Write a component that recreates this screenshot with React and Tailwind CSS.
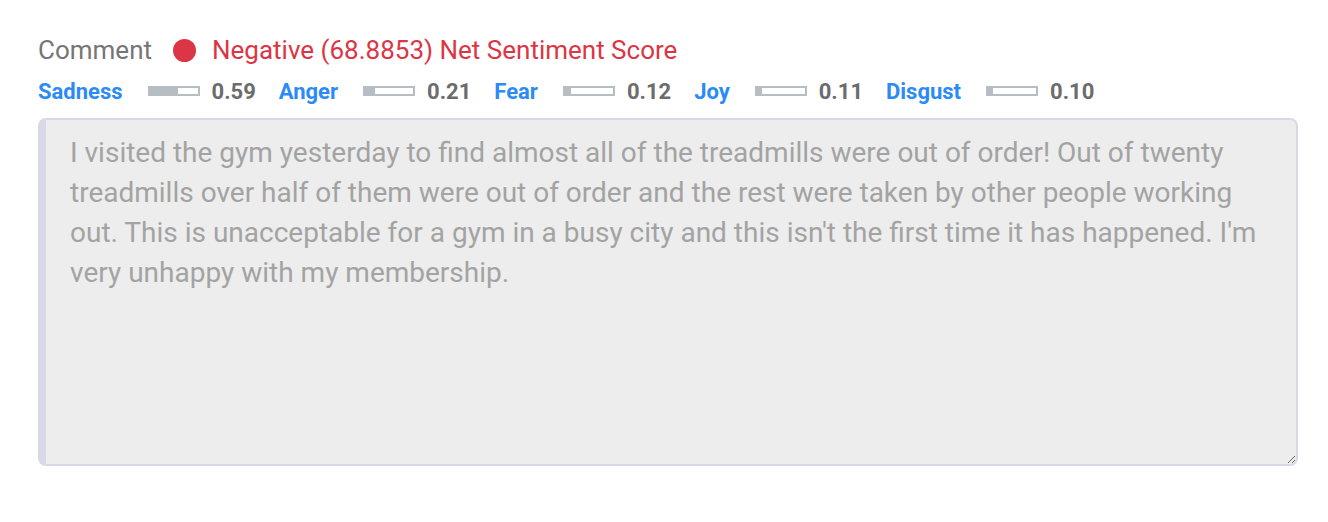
const emotions = [
  { name: "Sadness", score: 0.59 },
  { name: "Anger", score: 0.21 },
  { name: "Fear", score: 0.12 },
  { name: "Joy", score: 0.11 },
  { name: "Disgust", score: 0.1 },
];

const comment =
  "I visited the gym yesterday to find almost all of the treadmills were out of order! Out of twenty treadmills over half of them were out of order and the rest were taken by other people working out. This is unacceptable for a gym in a busy city and this isn't the first time it has happened. I'm very unhappy with my membership.";

const App = () => {
  return (
    <div className="min-h-screen bg-white px-[38px] pt-[33px]" style={{ fontFamily: "Roboto, 'Liberation Sans', sans-serif" }}>
      {/* Header */}
      <div className="flex items-center h-[34px] text-[26px]">
        <span className="text-[#767676]">Comment</span>
        <span className="ml-[21px] w-[23px] h-[23px] rounded-full bg-[#dc3545]" />
        <span className="ml-[16px] text-[#dc3545]">Negative (68.8853) Net Sentiment Score</span>
      </div>

      {/* Emotion scores */}
      <div className="flex items-center h-[28px] mt-[10px] text-[22px] font-bold">
        {emotions.map((e, i) => (
          <div key={e.name} className={`flex items-center ${i > 0 ? "ml-[23px]" : ""}`}>
            <span className="text-[#2c8af6]">{e.name}</span>
            <div className="ml-[25px] w-[52px] h-[10px] border-2 border-[#b6bec4] bg-white">
              <div className="h-full bg-[#b6bec4]" style={{ width: `${e.score * 100}%` }} />
            </div>
            <span className="ml-[12px] text-[#6c6c6c]">{e.score.toFixed(2)}</span>
          </div>
        ))}
      </div>

      {/* Comment box */}
      <textarea
        readOnly
        value={comment}
        className="block mt-[13px] w-[1260px] h-[348px] rounded-[8px] border-2 border-l-[8px] border-[#d8d8e8] bg-[#ededed] pl-[24px] pr-[30px] pt-[13px] text-[28px] leading-[40px] text-[#a3a3a3] outline-none resize-y"
        style={{ fontFamily: "Roboto, 'Liberation Sans', sans-serif" }}
      />
    </div>
  );
};

export default App;
